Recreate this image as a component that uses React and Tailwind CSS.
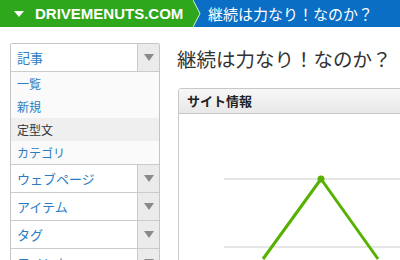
import React from "react";

const jp = { fontFamily: '"Noto Sans CJK JP", "Noto Sans", sans-serif' };

function Arrow() {
  return (
    <div className="w-[22px] self-stretch flex items-center justify-center bg-[#ebebeb] border-l border-[#cbcbcb]">
      <svg width="10" height="7" viewBox="0 0 10 7">
        <polygon points="0,0 10,0 5,7" fill="#8a8a8a" />
      </svg>
    </div>
  );
}

function Row({ label, top }) {
  return (
    <div className={top ? "flex h-[27px]" : "flex h-[28px] border-t border-[#cbcbcb]"}>
      <div className="flex-1 flex items-center pl-[6px] text-[13px] text-[#2a7cc4] bg-white">{label}</div>
      <Arrow />
    </div>
  );
}

export default function App() {
  return (
    <div className="w-[400px] h-[260px] overflow-hidden bg-white" style={jp}>
      {/* header */}
      <div className="flex h-[27px]">
        <div className="w-[193px] bg-[#2ea71c] flex items-center">
          <svg width="10" height="6" viewBox="0 0 10 6" className="ml-[14px] mt-[1px]">
            <polygon points="0,0 10,0 5,6" fill="#ffffff" />
          </svg>
          <span
            className="ml-[11px] text-white font-bold text-[15px] leading-none"
            style={{ fontFamily: '"Liberation Sans", Arial, sans-serif' }}
          >
            DRIVEMENUTS.COM
          </span>
        </div>
        <svg width="8" height="27" viewBox="0 0 8 27" className="block bg-[#0a6ec4]">
          <polygon points="0,0 0,27 7,13.5" fill="#2ea71c" />
          <polyline points="0,0 7,13.5 0,27" fill="none" stroke="#d8ecd0" strokeWidth="1" />
        </svg>
        <div className="flex-1 bg-[#0a6ec4] flex items-center pl-[7px] text-white text-[15px] leading-none">
          継続は力なり！なのか？
        </div>
      </div>

      <div className="flex">
        {/* sidebar */}
        <div className="ml-[10px] mt-[16px] w-[150px] shrink-0 border border-[#c5c5c5] rounded-[2px] overflow-hidden">
          <Row label="記事" top />
          <div className="border-t border-[#cbcbcb] bg-[#fafafa] text-[12px]">
            <div className="h-[23px] flex items-center pl-[6px] text-[#2a7cc4]">一覧</div>
            <div className="h-[23px] flex items-center pl-[6px] text-[#2a7cc4]">新規</div>
            <div className="h-[23px] flex items-center pl-[6px] text-[#333] bg-[#efefef]">定型文</div>
            <div className="h-[23px] flex items-center pl-[6px] text-[#2a7cc4]">カテゴリ</div>
          </div>
          <Row label="ウェブページ" />
          <Row label="アイテム" />
          <Row label="タグ" />
          <Row label="コメント" />
        </div>

        {/* main */}
        <div className="ml-[17px] w-[260px] shrink-0">
          <div className="mt-[17px] h-[30px] flex items-center text-[19.5px] text-[#333] leading-none whitespace-nowrap">
            継続は力なり！なのか？
          </div>
          <div className="mt-[14px] ml-[1px] border border-[#c8c8c8] rounded-tl-[3px] overflow-hidden">
            <div className="h-[25px] flex items-center pl-[8px] font-bold text-[13px] text-[#222] bg-gradient-to-b from-[#f7f7f7] to-[#e8e8e8] border-b border-[#c8c8c8]">
              サイト情報
            </div>
            <div className="h-[160px] bg-white">
              <svg width="260" height="160" viewBox="0 0 260 160" className="block">
                <line x1="45" y1="65" x2="260" y2="65" stroke="#e6e6e6" strokeWidth="2" />
                <line x1="45" y1="133" x2="260" y2="133" stroke="#e6e6e6" strokeWidth="2" />
                <polyline
                  points="84,145 142,65 199,145"
                  fill="none"
                  stroke="#55b200"
                  strokeWidth="3"
                  strokeLinejoin="round"
                />
                <circle cx="142" cy="65" r="3.5" fill="#55b200" />
              </svg>
            </div>
          </div>
        </div>
      </div>
    </div>
  );
}
